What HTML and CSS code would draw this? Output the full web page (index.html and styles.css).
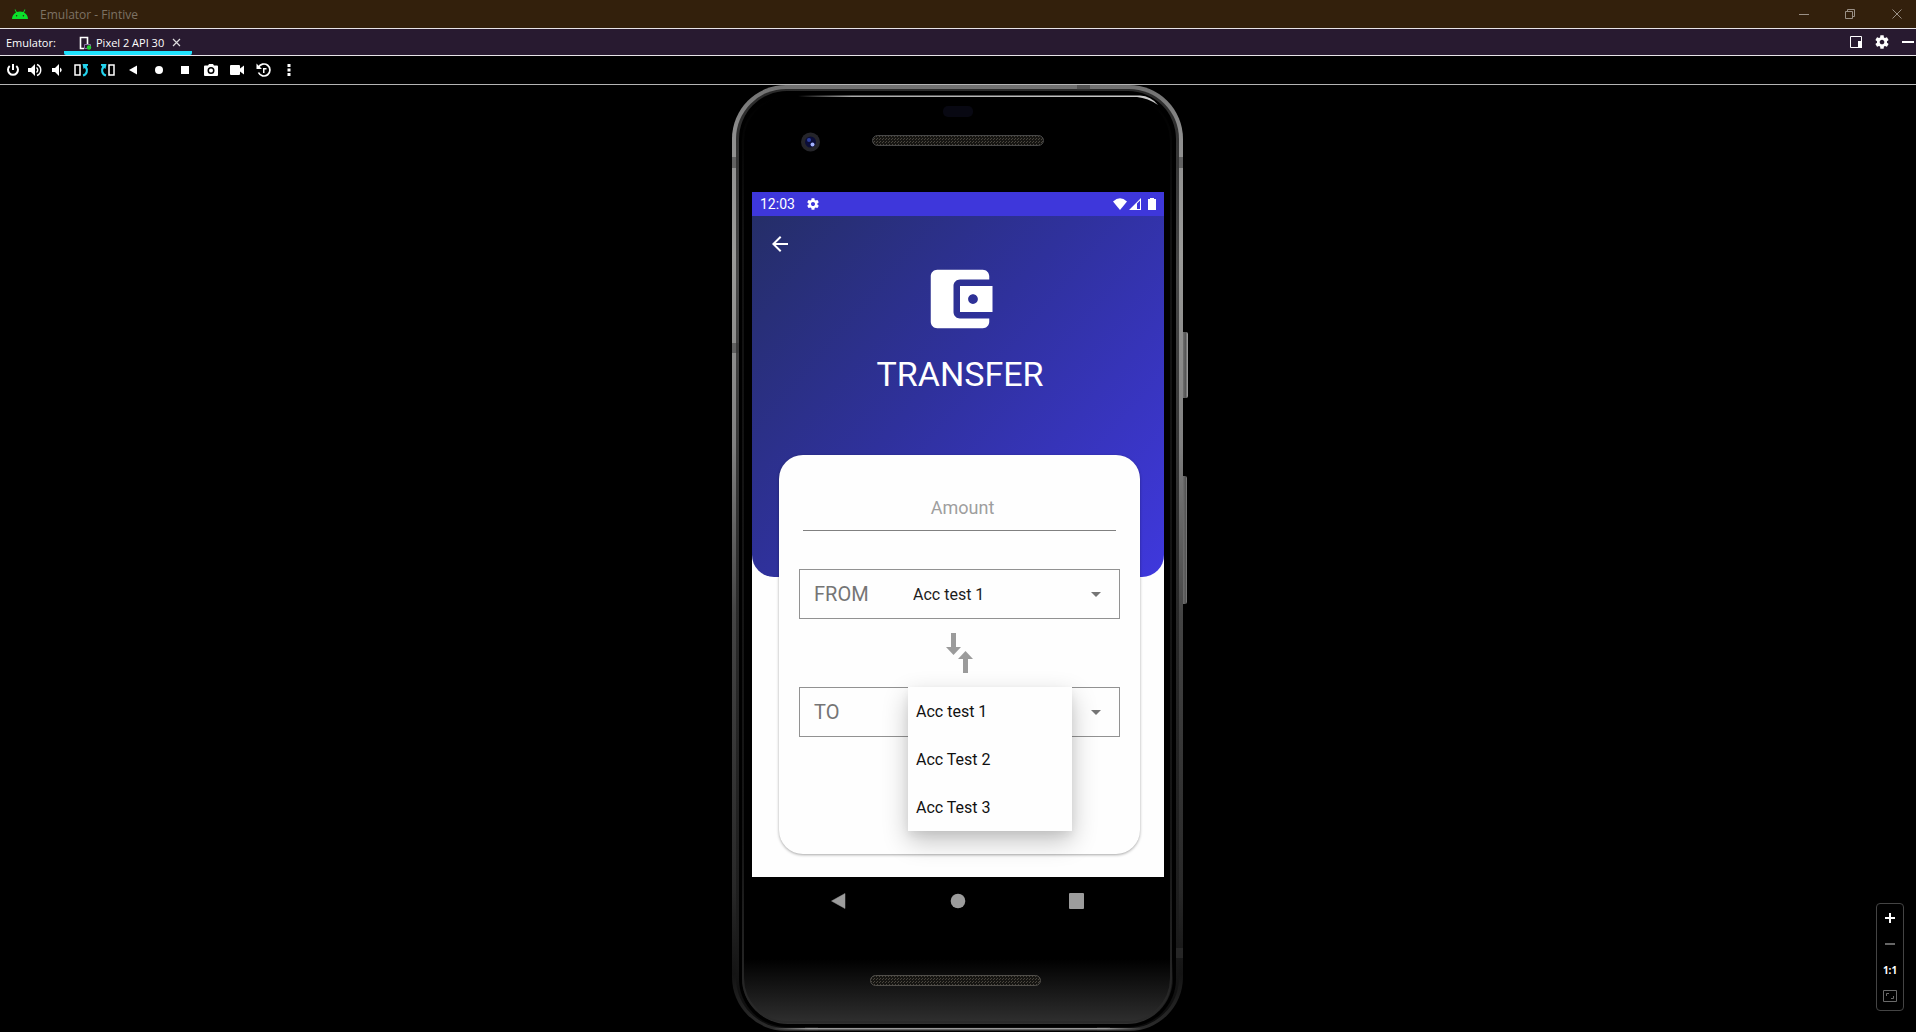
FILE: index.html
```html
<!DOCTYPE html>
<html lang="en">
<head>
<meta charset="utf-8">
<title>Emulator - Fintive</title>
<link rel="stylesheet" href="styles.css">
</head>
<body>
<header class="titlebar">
  <svg class="droid" width="16" height="10" viewBox="0 0 16 10"><path fill="#0be02b" d="M0 10a8 7.600 0 0 1 4-6.500L2.600.7l.7-.4 1.500 2.800a8.500 8.500 0 0 1 6.400 0L12.700.3l.7.4L12 3.500A8 7.600 0 0 1 16 10z"/><circle cx="4.600" cy="6.700" r=".7" fill="#33200c"/><circle cx="11.400" cy="6.700" r=".7" fill="#33200c"/></svg>
  <h1 class="window-title">Emulator - Fintive</h1>
  <div class="window-buttons">
    <button aria-label="Minimize"><svg width="12" height="12" viewBox="0 0 12 12"><path d="M1 6.500h10"/></svg></button>
    <button aria-label="Restore"><svg width="12" height="12" viewBox="0 0 12 12"><path d="M.5 3.500h7v7h-7zM2.500 3.500v-2h7v7h-2"/></svg></button>
    <button aria-label="Close"><svg width="12" height="12" viewBox="0 0 12 12"><path d="M1.500 1.500l9 9M10.500 1.500l-9 9"/></svg></button>
  </div>
</header>

<nav class="tabbar" aria-label="Devices">
  <span class="tabbar-label">Emulator:</span>
  <div class="tab">
    <svg width="13" height="14" viewBox="0 0 13 14"><path d="M5 12.500H1.500v-11h7V8" fill="none" stroke="#fff" stroke-width="1.600"/><path d="M5.500 8.500h6v4h-6z" fill="#281a30" stroke="#8d6ba8"/><circle cx="10" cy="11.500" r="2.200" fill="#1fd12f"/></svg>
    <span>Pixel 2 API 30</span>
    <button aria-label="Close tab"><svg width="9" height="9" viewBox="0 0 9 9"><path d="M1 1l7 7M8 1L1 8" stroke="#ddd" stroke-width="1.200"/></svg></button>
  </div>
  <div class="tabbar-actions">
    <button aria-label="Window mode"><svg width="12" height="12" viewBox="0 0 12 12"><path d="M.5.500h11v11H.5z" fill="none" stroke="#fff"/><path d="M8 5h4v7H8z" fill="#fff"/></svg></button>
    <button aria-label="Settings"><svg width="16" height="16" viewBox="0 0 24 24"><use href="#gear"/></svg></button>
    <button aria-label="Hide"><svg width="12" height="12" viewBox="0 0 12 12"><path d="M0 5h12v2H0z" fill="#fff"/></svg></button>
  </div>
</nav>

<svg class="defs" aria-hidden="true"><defs>
  <path id="gear" fill="#fff" d="M19.430 12.980c.04-.32.07-.64.07-.98s-.03-.66-.07-.98l2.110-1.650c.19-.15.24-.42.12-.64l-2-3.460c-.12-.22-.39-.3-.61-.22l-2.490 1c-.52-.4-1.080-.73-1.690-.98l-.38-2.650C14.460 2.180 14.250 2 14 2h-4c-.25 0-.46.18-.49.42l-.38 2.650c-.61.25-1.170.59-1.690.98l-2.490-1c-.23-.09-.49 0-.61.22l-2 3.460c-.13.22-.07.49.12.64l2.110 1.650c-.04.32-.07.65-.07.98s.03.66.07.98l-2.110 1.650c-.19.15-.24.42-.12.64l2 3.460c.12.22.39.3.61.22l2.490-1c.52.4 1.080.73 1.690.98l.38 2.650c.03.24.24.42.49.42h4c.25 0 .46-.18.49-.42l.38-2.650c.61-.25 1.170-.59 1.690-.98l2.490 1c.23.09.49 0 .61-.22l2-3.460c.12-.22.07-.49-.12-.64l-2.110-1.650zM12 15.500c-1.930 0-3.500-1.570-3.500-3.500s1.570-3.500 3.500-3.500 3.500 1.570 3.500 3.500-1.570 3.500-3.500 3.500z"/>
</defs></svg>

<div class="toolbar" role="toolbar" aria-label="Emulator controls">
  <button class="narrow" aria-label="Power"><svg width="14" height="14" viewBox="0 0 14 14"><path d="M7 1v6M3.700 3a5 5 0 1 0 6.600 0" fill="none" stroke="#fff" stroke-width="2"/></svg></button>
  <button class="narrow" aria-label="Volume up"><svg width="14" height="14" viewBox="0 0 14 14"><path d="M0 5v4h3l4 4V1L3 5z" fill="#fff"/><path d="M8.500 4.500q2.500 2.500 0 5M9 1.500c5 2 5 9 0 11" fill="none" stroke="#fff" stroke-width="1.400"/></svg></button>
  <button class="narrow" aria-label="Volume down"><svg width="14" height="14" viewBox="0 0 14 14"><path d="M2 5v4h3l4 4V1L5 5z" fill="#fff"/><path d="M10 4.500q3.500 2.500 0 5z" fill="#fff"/></svg></button>
  <button aria-label="Rotate left"><svg width="15" height="14" viewBox="0 0 15 14"><path d="M1 2h5v10H1z" fill="none" stroke="#fff" stroke-width="1.500"/><path d="M9 12.500c4-1 5-5.500 2.500-9" fill="none" stroke="#22d3ee" stroke-width="2.200"/><path d="M8.500 1H14v1.500L9.500 6z" fill="#22d3ee"/></svg></button>
  <button aria-label="Rotate right"><svg width="15" height="14" viewBox="0 0 15 14"><path d="M9 2h5v10H9z" fill="none" stroke="#fff" stroke-width="1.500"/><path d="M6 12.500c-4-1-5-5.500-2.500-9" fill="none" stroke="#22d3ee" stroke-width="2.200"/><path d="M6.500 1H1v1.500L5.500 6z" fill="#22d3ee"/></svg></button>
  <button aria-label="Back"><svg width="8" height="10" viewBox="0 0 8 10"><path d="M0 5l8-4.500v9z" fill="#fff"/></svg></button>
  <button aria-label="Home"><svg width="8" height="8" viewBox="0 0 8 8"><circle cx="4" cy="4" r="4" fill="#fff"/></svg></button>
  <button aria-label="Overview"><svg width="8" height="8" viewBox="0 0 8 8"><path d="M0 0h8v8H0z" fill="#fff"/></svg></button>
  <button aria-label="Screenshot"><svg width="14" height="12" viewBox="0 0 14 12"><path fill="#fff" fill-rule="evenodd" d="M4 1.500L5 0h4l1 1.500h3a1 1 0 0 1 1 1V11a1 1 0 0 1-1 1H1a1 1 0 0 1-1-1V2.500a1 1 0 0 1 1-1zM7 3a3.500 3.500 0 1 0 0 7 3.500 3.500 0 0 0 0-7z"/><circle cx="7" cy="6.500" r="2" fill="#fff"/></svg></button>
  <button aria-label="Record"><svg width="14" height="10" viewBox="0 0 14 10"><path d="M0 1a1 1 0 0 1 1-1h8a1 1 0 0 1 1 1v2.500L14 .5v9l-4-3V9a1 1 0 0 1-1 1H1a1 1 0 0 1-1-1z" fill="#fff"/></svg></button>
  <button aria-label="Snapshots"><svg width="15" height="14" viewBox="0 0 15 14"><path d="M2.500 4.500A6 6 0 1 1 2.500 9.500" fill="none" stroke="#fff" stroke-width="1.700"/><path d="M.5.500V6H6zM7 10V5H10.500v1.500H8.500V10z" fill="#fff"/></svg></button>
  <button aria-label="More"><svg width="4" height="12" viewBox="0 0 4 12"><path d="M.5 0h3v3h-3zM.5 4.500h3v3h-3zM.5 9h3v3h-3z" fill="#fff"/></svg></button>
</div>

<main class="stage">
  <div class="phone">
    <svg class="shell" width="460" height="947" viewBox="0 0 460 947" aria-hidden="true">
      <defs>
        <linearGradient id="metal" x2="0" y2="1"><stop offset="0" stop-color="#6f6f6f"/><stop offset=".05" stop-color="#8e8e8e"/><stop offset=".18" stop-color="#9a9a98"/><stop offset=".38" stop-color="#808080"/><stop offset=".56" stop-color="#444"/><stop offset=".85" stop-color="#282828"/><stop offset=".94" stop-color="#141414"/><stop offset="1" stop-color="#2c2c2c"/></linearGradient>
        <linearGradient id="metal2" x2="0" y2="1"><stop offset="0" stop-color="#2a2a2a"/><stop offset=".2" stop-color="#484848"/><stop offset=".5" stop-color="#2c2c2c"/><stop offset=".9" stop-color="#1c1c1c"/><stop offset="1" stop-color="#0c0c0c"/></linearGradient>
        <linearGradient id="glass" x2="0" y2="1"><stop offset="0" stop-color="#000"/><stop offset=".93" stop-color="#000"/><stop offset="1" stop-color="#303030"/></linearGradient>
        <linearGradient id="edge"><stop offset="0" stop-color="#bbb" stop-opacity="0"/><stop offset=".15" stop-color="#aaa"/><stop offset="1" stop-color="#ccc"/></linearGradient>
        <linearGradient id="foot"><stop offset="0" stop-color="#999" stop-opacity="0"/><stop offset=".1" stop-color="#999"/><stop offset=".9" stop-color="#999"/><stop offset="1" stop-color="#999" stop-opacity="0"/></linearGradient>
        <linearGradient id="key"><stop offset="0" stop-color="#777"/><stop offset=".6" stop-color="#555"/><stop offset="1" stop-color="#aaa"/></linearGradient>
        <linearGradient id="rim" x2="0" y2="1"><stop offset="0" stop-color="#000"/><stop offset=".15" stop-color="#111"/><stop offset=".8" stop-color="#161616"/><stop offset="1" stop-color="#2a2a2a"/></linearGradient>
        <pattern id="mesh" width="3" height="3" patternUnits="userSpaceOnUse"><path d="M0 0h3v3H0z" fill="#161512"/><path d="M0 0h1v1H0zM1 2h1v1H1z" fill="#4a463e"/></pattern>
      </defs>
      <path d="M450 247h4q2 0 2 2v62q0 2-2 2h-4zM450 391h3q2 0 2 2v124q0 2-2 2h-3z" fill="url(#key)"/>
      <rect x="0" y="0" width="451" height="946" rx="54" fill="url(#metal)"/>
      <rect x="4" y="4" width="443" height="939" rx="50" fill="url(#metal2)"/>
      <rect x="7" y="6" width="437" height="936" rx="48" fill="#000"/>
      <path d="M0 72h7v11H0zM444 72h7v11h-7zM0 258h7v10H0zM444 863h7v10h-7zM345 0h13v5h-13zM73 942h13v4H73zM365 942h13v4h-13z" fill="#333" opacity=".5"/>
      <rect x="10" y="10" width="431" height="929" rx="46" fill="url(#glass)"/>
      <rect x="11" y="12" width="428" height="925" rx="44" fill="none" stroke="url(#rim)" stroke-width="2"/>
      <path d="M66 10.500H408Q419 11 426 20Q416 13 405 12H66z" fill="url(#edge)"/>
      <path d="M40 943h371v1.500H40z" fill="url(#foot)"/>
      <rect x="211" y="21" width="30" height="11" rx="5" fill="#080812"/>
      <circle cx="78.500" cy="57" r="9.500" fill="#25252a"/><circle cx="78.500" cy="57" r="5.500" fill="#0b0d38"/><circle cx="77" cy="55" r="2" fill="#2c3fa0"/><circle cx="80.500" cy="59.500" r="2" fill="#a3b2ff"/>
      <rect x="140.500" y="50.500" width="171" height="10" rx="5" fill="url(#mesh)" stroke="#484848"/>
      <rect x="138.500" y="890.500" width="170" height="10" rx="5" fill="url(#mesh)" stroke="#504e4a"/>
    </svg>

    <section class="screen" aria-label="Device screen">
      <div class="statusbar">
        <time>12:03</time>
        <svg width="14" height="14" viewBox="0 0 24 24"><use href="#gear"/></svg>
        <div class="signals">
          <svg width="14" height="12" viewBox="0 0 14 12"><path d="M7 12L0 3.500Q7-3 14 3.500z" fill="#fff"/></svg>
          <svg width="12" height="12" viewBox="0 0 12 12"><path fill="#fff" fill-rule="evenodd" d="M12 0v12H0zM8 5.500V11h3V2.500z"/></svg>
          <svg class="battery" width="8" height="12" viewBox="0 0 8 12"><path d="M0 1h2V0h4v1h2v11H0z" fill="#fff"/></svg>
        </div>
      </div>
      <div class="app">
        <div class="hero">
          <button class="back" aria-label="Back"><svg width="24" height="24" viewBox="0 0 24 24"><path fill="#fff" d="M20 11H7.830l5.590-5.590L12 4l-8 8 8 8 1.410-1.410L7.830 13H20v-2z"/></svg></button>
          <svg class="wallet" width="78" height="78" viewBox="0 0 24 24"><path fill="#fff" d="M21 18v1c0 1.100-.9 2-2 2H5c-1.110 0-2-.9-2-2V5c0-1.100.89-2 2-2h14c1.100 0 2 .9 2 2v1h-9c-1.110 0-2 .9-2 2v8c0 1.100.89 2 2 2h9zm-9-2h10V8H12v8zm4-2.500c-.83 0-1.500-.67-1.500-1.500s.67-1.500 1.500-1.500 1.500.67 1.500 1.500-.67 1.500-1.500 1.500z"/></svg>
          <h2 class="heading">TRANSFER</h2>
        </div>
        <form class="card">
          <input class="amount" type="text" placeholder="Amount" aria-label="Amount">
          <div class="field">
            <label for="from">FROM</label>
            <select id="from"><option>Acc test 1</option><option>Acc Test 2</option><option>Acc Test 3</option></select>
            <svg class="caret" width="10" height="5" viewBox="0 0 10 5"><path d="M0 0h10L5 5z" fill="#757575"/></svg>
          </div>
          <svg class="swap" width="28" height="40" viewBox="0 0 28 40"><path fill="#9b9b9b" d="M5 0h5v14h5l-7.500 8L0 14h5zM19.500 18l7.500 8h-5v14h-5V26h-5z"/></svg>
          <div class="field">
            <label for="to">TO</label>
            <select id="to"><option>Acc test 1</option><option>Acc Test 2</option><option>Acc Test 3</option></select>
            <svg class="caret" width="10" height="5" viewBox="0 0 10 5"><path d="M0 0h10L5 5z" fill="#757575"/></svg>
            <ul class="menu" role="listbox" aria-label="To account">
              <li role="option">Acc test 1</li>
              <li role="option">Acc Test 2</li>
              <li role="option">Acc Test 3</li>
            </ul>
          </div>
        </form>
      </div>
      <div class="navkeys">
        <button aria-label="Back"><svg width="16" height="16" viewBox="0 0 16 16"><path d="M.5 8L14 .5v15z" fill="#9c9c9c" stroke="#9c9c9c" stroke-width=".5"/></svg></button>
        <button aria-label="Home"><svg width="16" height="16" viewBox="0 0 16 16"><circle cx="8" cy="8" r="7.300" fill="#9c9c9c"/></svg></button>
        <button aria-label="Overview"><svg width="16" height="16" viewBox="0 0 16 16"><rect width="15" height="16" rx="1" fill="#9c9c9c"/></svg></button>
      </div>
    </section>
  </div>

  <div class="zoom" role="group" aria-label="Zoom">
    <button aria-label="Zoom in"><svg width="10" height="10" viewBox="0 0 10 10"><path d="M4 0h2v4h4v2H6v4H4V6H0V4h4z" fill="#fff"/></svg></button>
    <button aria-label="Zoom out"><svg width="10" height="2" viewBox="0 0 10 2"><path d="M0 0h10v2H0z" fill="#666"/></svg></button>
    <button>1:1</button>
    <button aria-label="Fit"><svg width="14" height="12" viewBox="0 0 14 12"><path d="M.5.500h13v11H.5zM3.500 6V3.500H6M8 8.500h2.500V6" fill="none" stroke="#6a6a6a"/></svg></button>
  </div>
</main>
</body>
</html>
```
FILE: styles.css
```css
* {
  box-sizing: border-box;
}

body {
  margin: 0;
  min-height: 100vh;
  display: flex;
  flex-direction: column;
  background: #000;
  color: #fff;
  font: 12px/16px "Noto Sans", "Open Sans", sans-serif;
}

button {
  display: flex;
  align-items: center;
  justify-content: center;
  padding: 0;
  border: 0;
  background: none;
  color: inherit;
  font: inherit;
}

svg {
  display: block;
  flex: none;
}

.defs {
  position: absolute;
  width: 0;
  height: 0;
}

.titlebar {
  display: flex;
  align-items: center;
  height: 29px;
  padding-left: 12px;
  gap: 12px;
  background: #33200c;
  border-bottom: 1px solid #e8e4e8;
}

.window-title {
  margin: 0;
  padding-top: 1px;
  font: 12px/16px "Open Sans", sans-serif;
  color: #7d7264;
}

.window-buttons {
  display: flex;
  margin-left: auto;
}

.window-buttons button {
  width: 47px;
  height: 28px;
}

.window-buttons button:last-child {
  width: 46px;
  margin-right: -4px;
}

.window-buttons path {
  fill: none;
  stroke: #9a9086;
}

.tabbar {
  display: flex;
  align-items: center;
  height: 27px;
  background: #281a30;
  border-bottom: 1px solid #e8e4e8;
  font: 11px/16px "Open Sans", sans-serif;
}

.tabbar-label {
  width: 64px;
  padding: 2px 0 0 6px;
}

.tab {
  display: flex;
  align-items: center;
  align-self: stretch;
  gap: 4px;
  width: 128px;
  padding: 5px 8px 0 15px;
  border-bottom: 4px solid #1fe3ff;
  border-radius: 0 0 2px 2px;
}

.tab button {
  margin-left: 4px;
}

.tabbar-actions {
  display: flex;
  align-items: center;
  gap: 12px;
  margin-left: auto;
  padding-right: 2px;
}

.toolbar {
  display: flex;
  height: 29px;
  padding-left: 2px;
  border-bottom: 1px solid #b4b4b4;
}

.toolbar button {
  width: 26px;
}

.toolbar .narrow {
  width: 22px;
}

.stage {
  position: relative;
  flex: 1;
  display: flex;
  justify-content: center;
}

.phone {
  position: relative;
  width: 452px;
  height: 947px;
  padding: 107px 20px 0;
}

.shell {
  position: absolute;
  left: 0;
  top: 0;
}

.screen {
  position: relative;
  font-family: Roboto, sans-serif;
}

.statusbar {
  display: flex;
  align-items: center;
  gap: 11px;
  height: 24px;
  padding: 0 8px;
  background: #3e37db;
  font-size: 14px;
}

.signals {
  display: flex;
  align-items: center;
  gap: 2px;
  margin-left: auto;
}

.battery {
  margin-left: 5px;
}

.app {
  height: 661px;
  background: #fefefe;
}

.hero {
  height: 361px;
  padding: 16px 12px 16px 16px;
  border-radius: 0 0 22px 22px;
  background: linear-gradient(131deg, #252e68, #2f319c 45%, #3f38dd);
}

.wallet {
  margin: 4px auto 16px;
}

.heading {
  margin: 0;
  text-align: center;
  font-size: 34px;
  line-height: 40px;
  font-weight: 400;
}

.card {
  position: relative;
  height: 399px;
  margin: -122px 24px 0 27px;
  padding: 32px 20px;
  border-radius: 24px;
  background: #fefefe;
  box-shadow: 0 1px 3px rgba(0, 0, 0, 0.35);
}

.amount {
  display: block;
  width: calc(100% - 8px);
  height: 44px;
  margin: 0 4px 38px;
  padding: 0 0 2px 6px;
  border: 0;
  border-bottom: 1px solid #808080;
  background: none;
  text-align: center;
  font: 18px/24px Roboto, sans-serif;
}

.amount::placeholder {
  color: #9e9e9e;
}

.field {
  position: relative;
  display: flex;
  align-items: center;
  height: 50px;
  padding: 0 18px 0 14px;
  border: 1px solid #929292;
}

.field label {
  width: 99px;
  font-size: 20px;
  line-height: 24px;
  color: #757575;
}

.field select {
  flex: 1;
  height: 48px;
  padding: 2px 0 0;
  border: 0;
  background: none;
  appearance: none;
  font: 16px/24px Roboto, sans-serif;
  color: #1c1c1c;
}

.swap {
  margin: 14px auto;
}

.menu {
  position: absolute;
  left: 108px;
  top: -1px;
  width: 164px;
  margin: 0;
  padding: 0;
  list-style: none;
  background: #fefefe;
  box-shadow: 0 10px 24px rgba(0, 0, 0, 0.24), 0 4px 8px rgba(0, 0, 0, 0.06);
  color: #111;
  font-size: 16px;
}

.menu li {
  height: 48px;
  padding: 1px 0 0 8px;
  line-height: 48px;
}

.navkeys {
  display: flex;
  justify-content: center;
  gap: 71px;
  height: 48px;
}

.navkeys button {
  width: 48px;
}

.zoom {
  position: absolute;
  right: 12px;
  bottom: 21px;
  width: 28px;
  padding: 1px 0;
  border: 1px solid #444;
  border-radius: 4px;
}

.zoom button {
  width: 26px;
  height: 26px;
  font-size: 10px;
  font-weight: 700;
}
```
